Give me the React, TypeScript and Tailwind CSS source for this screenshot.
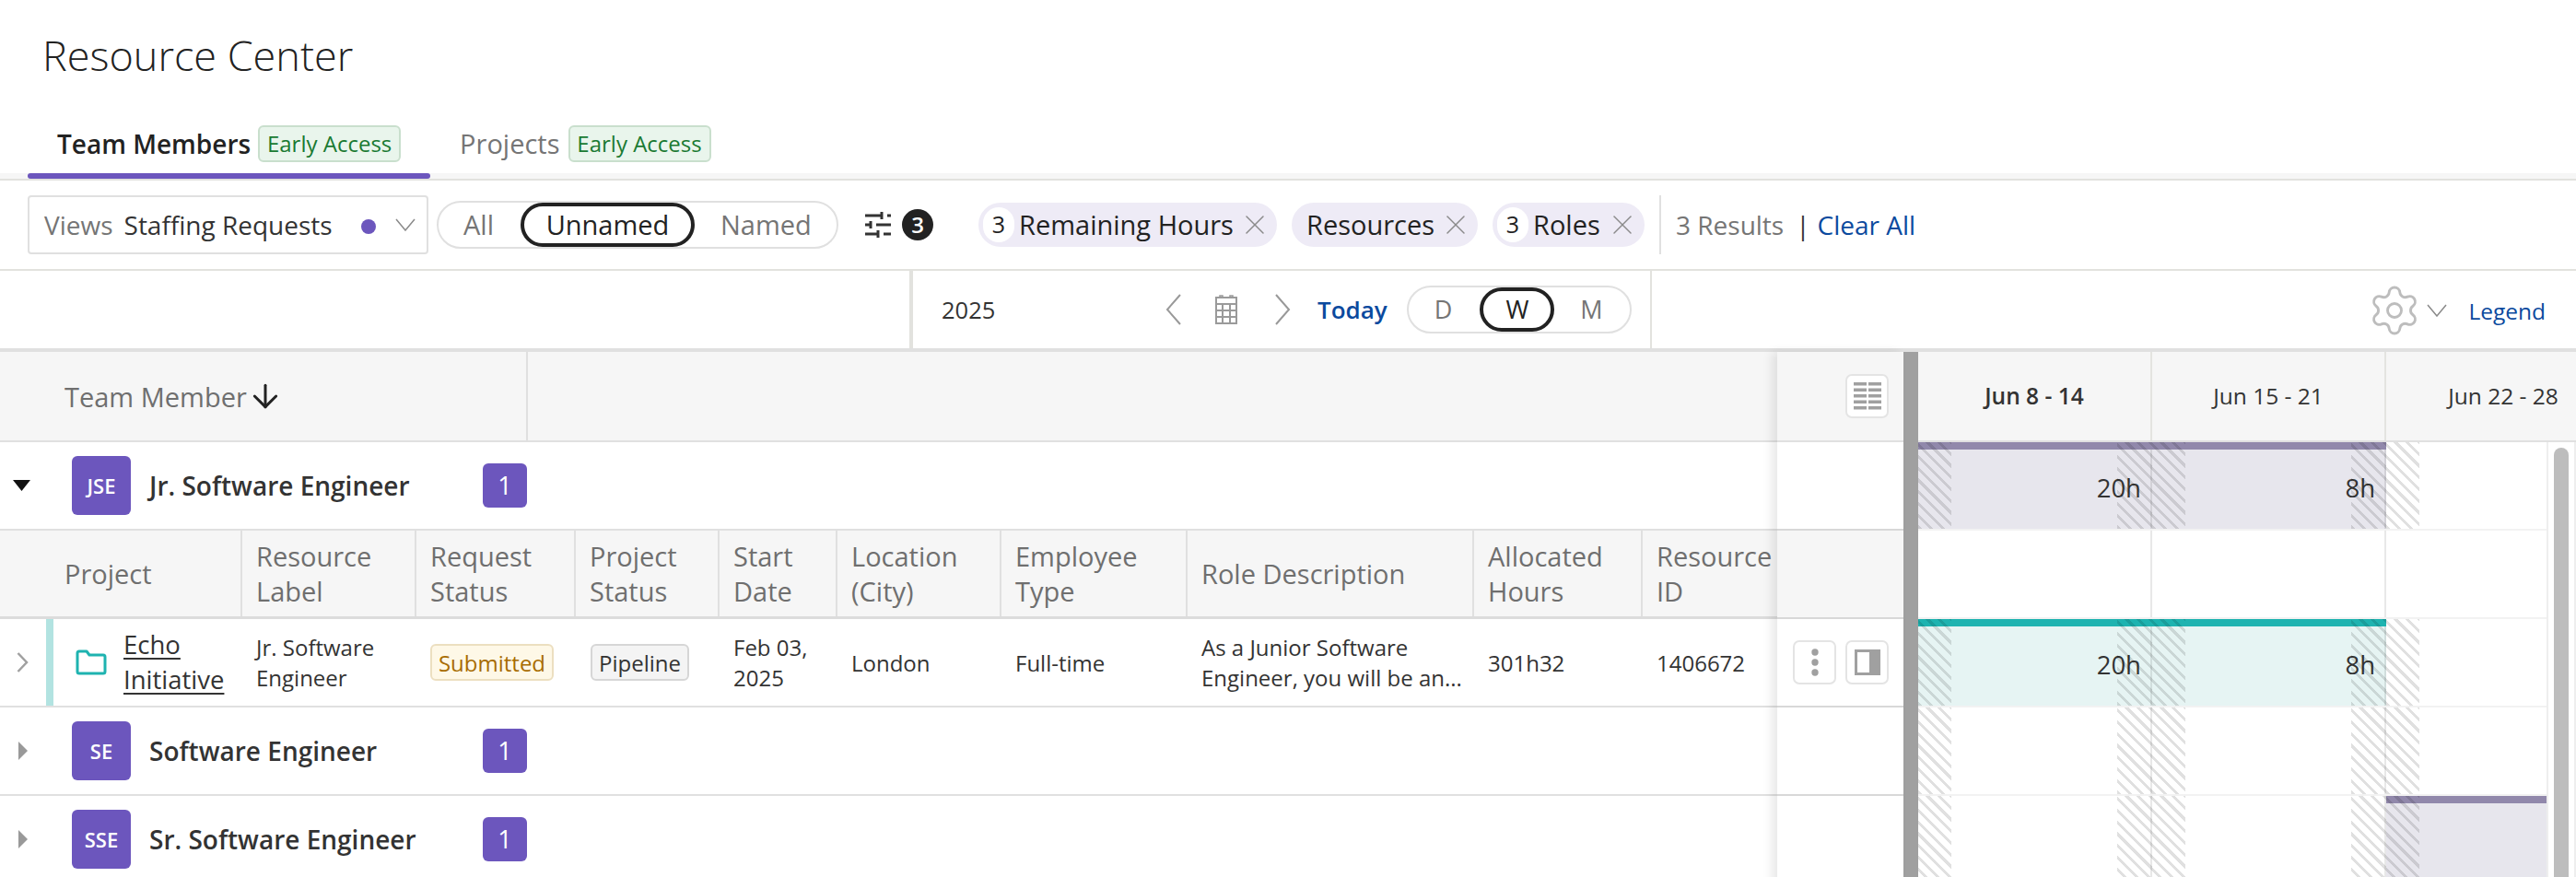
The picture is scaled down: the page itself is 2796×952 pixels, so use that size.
import React from "react";
import { ArrowDown, Settings, X } from "lucide-react";

const hatch =
  "pointer-events-none absolute top-0 bottom-0 bg-[repeating-linear-gradient(45deg,rgba(0,0,0,0.12)_0,rgba(0,0,0,0.12)_3px,transparent_3px,transparent_9px)]";

function Thin({ d, className, w = 24, h = 24, sw = 2, stroke = "#999999" }: { d: string; className?: string; w?: number; h?: number; sw?: number; stroke?: string }) {
  return (
    <svg width={w} height={h} viewBox={`0 0 ${w} ${h}`} fill="none" stroke={stroke} strokeWidth={sw} className={className}>
      <path d={d} />
    </svg>
  );
}

function EarlyAccess() {
  return (
    <span className="inline-flex h-[40px] w-[155px] items-center justify-center rounded-[6px] border-2 border-[#c9dfcd] bg-[#e9f5ec] text-[24px] text-[#1a7a32]">
      Early Access
    </span>
  );
}

function Chip({ count, label, width }: { count?: string; label: string; width: string }) {
  return (
    <div className={`flex h-[48px] items-center rounded-full bg-[#eeebf6] pl-[5px] ${width}`}>
      {count ? (
        <span className="mr-[5px] flex h-[38px] w-[34px] items-center justify-center rounded-full bg-white text-[25px] text-[#222222]">{count}</span>
      ) : (
        <span className="w-[11px]" />
      )}
      <span className="text-[29px] font-medium text-[#222222]">{label}</span>
      <X className="ml-auto mr-[6px] text-[#8a8a8a]" size={36} strokeWidth={1} />
    </div>
  );
}

function FilterRow() {
  return (
    <div className="flex h-[98px] items-center border-b-2 border-[#e2e2de] pl-[30px]">
      <div className="flex h-[64px] w-[435px] items-center rounded-[4px] border-2 border-[#e0e0e0] pl-[16px]">
        <span className="text-[28px] text-[#757575]">Views</span>
        <span className="ml-[12px] text-[28px] text-[#333333]">Staffing Requests</span>
        <span className="ml-[31px] mt-[4px] h-[16px] w-[16px] shrink-0 rounded-full bg-[#6c56bd]" />
        <Thin className="ml-[21px] shrink-0" w={22} h={14} sw={1.5} d="M1 1 L11 13 L21 1" stroke="#8a8a8a" />
      </div>
      <div className="ml-[9px] flex h-[52px] w-[436px] items-center rounded-full border-2 border-[#e0e0e0] text-[29px] text-[#757575]">
        <span className="ml-[27px]">All</span>
        <span className="ml-[29px] flex h-[48px] w-[189px] items-center justify-center rounded-full border-4 border-[#222222] font-medium text-[#222222]">Unnamed</span>
        <span className="ml-[28px]">Named</span>
      </div>
      <svg className="ml-[28px]" width="30" height="30" viewBox="0 0 30 30" fill="none" stroke="#333333" strokeWidth="3">
        <path d="M1 5h18M25 5h4M19 1v8M1 15h6M13 15h16M7 11v8M1 25h14M21 25h8M15 21v8" />
      </svg>
      <span className="ml-[11px] flex h-[34px] w-[34px] items-center justify-center rounded-full bg-[#222222] text-[24px] font-semibold text-white">3</span>
      <div className="ml-[49px] flex items-center gap-[16px]">
        <Chip count="3" label="Remaining Hours" width="w-[324px]" />
        <Chip label="Resources" width="w-[202px]" />
        <Chip count="3" label="Roles" width="w-[165px]" />
      </div>
      <div className="ml-[16px] flex h-[64px] items-center border-l-2 border-[#e0e0e0] pl-[16px] text-[28px] text-[#757575]">
        <span>3 Results</span>
        <span className="ml-[13px] text-[#333333]">|</span>
        <span className="ml-[8px] text-[#0b4a9e]">Clear All</span>
      </div>
    </div>
  );
}

function DateRow() {
  return (
    <div className="flex h-[88px] border-b-4 border-[#e0e0e0]">
      <div className="w-[987px]" />
      <div className="flex w-[806px] items-center border-x-[2px] border-l-4 border-[#e2e2de]">
        <span className="ml-[31px] w-[243px] text-[25.500px] text-[#333333]">2025</span>
        <Thin w={18} h={34} sw={2} d="M16 1 L2 17 L16 33" />
        <svg className="ml-[36px]" width="24" height="32" viewBox="0 0 24 32" fill="none" stroke="#9a9a9a" strokeWidth="2">
          <rect x="1" y="3" width="22" height="28" />
          <path d="M1 10h22M1 17h22M1 24h22M8 10v21M16 10v21" />
          <path d="M5 3V1h3v2M16 3V1h3v2" strokeWidth="1.5" />
        </svg>
        <Thin className="ml-[40px]" w={18} h={34} sw={2} d="M2 1 L16 17 L2 33" />
        <span className="ml-[29px] text-[26px] font-semibold text-[#0b4a9e]">Today</span>
        <div className="ml-[21px] flex h-[52px] w-[244px] items-center rounded-full border-2 border-[#e0e0e0] text-[27px] text-[#757575]">
          <span className="ml-[28px]">D</span>
          <span className="ml-[30px] flex h-[48px] w-[81px] items-center justify-center rounded-full border-4 border-[#222222] font-medium text-[#222222]">W</span>
          <span className="ml-[28px]">M</span>
        </div>
      </div>
      <div className="flex flex-1 items-center justify-end pr-[33px] pt-[2px]">
        <Settings size={60} strokeWidth={1.15} className="text-[#bdbdbd]" />
        <Thin className="ml-[5px]" w={22} h={14} sw={1.5} d="M1 1 L11 13 L21 1" stroke="#8a8a8a" />
        <span className="ml-[23px] mt-[2px] text-[24.500px] text-[#0b4a9e]">Legend</span>
      </div>
    </div>
  );
}

function GroupRow({ abbr, name, open }: { abbr: string; name: string; open?: boolean }) {
  return (
    <div className="flex h-[96px] items-center border-b-2 border-[#e0e0e0] bg-white">
      <div className="flex w-[78px] items-center pl-[14px]">
        {open ? (
          <svg width="20" height="12" viewBox="0 0 20 12"><path d="M0 0h19L9.500 12z" fill="#111111" /></svg>
        ) : (
          <svg className="ml-[6px]" width="10" height="20" viewBox="0 0 10 20"><path d="M0 0l10 10L0 20z" fill="#999999" /></svg>
        )}
      </div>
      <div className="flex h-[64px] w-[64px] items-center justify-center rounded-[6px] bg-[#6c56bd] text-[22px] font-semibold text-white">{abbr}</div>
      <div className="ml-[20px] w-[362px] text-[28px] font-semibold text-[#333333]">{name}</div>
      <div className="flex h-[48px] w-[48px] items-center justify-center rounded-[6px] bg-[#6c56bd] text-[27px] font-medium text-white">1</div>
    </div>
  );
}

const gridCols = "grid grid-cols-[261px_189px_173px_156px_128px_178px_202px_311px_183px_148px]";

function TableHead() {
  const cols = ["Resource Label", "Request Status", "Project Status", "Start Date", "Location (City)", "Employee Type", "Role Description", "Allocated Hours", "Resource ID"];
  const breaks: Record<string, string[]> = {
    "Resource Label": ["Resource", "Label"],
    "Request Status": ["Request", "Status"],
    "Project Status": ["Project", "Status"],
    "Start Date": ["Start", "Date"],
    "Location (City)": ["Location", "(City)"],
    "Employee Type": ["Employee", "Type"],
    "Role Description": ["Role Description"],
    "Allocated Hours": ["Allocated", "Hours"],
    "Resource ID": ["Resource", "ID"],
  };
  return (
    <div className={`${gridCols} h-[96px] border-b-[3px] border-[#dcdcdc] bg-[#f6f6f6] text-[29px] leading-[38px] text-[#6f6f6f]`}>
      <div className="flex items-center pl-[70px]">Project</div>
      {cols.map((c) => (
        <div key={c} className="flex flex-col justify-center whitespace-nowrap border-l-2 border-[#e0e0e0] pl-[15px]">
          {breaks[c].map((l) => (
            <span key={l}>{l}</span>
          ))}
        </div>
      ))}
    </div>
  );
}

function ProjectRow() {
  return (
    <div className={`${gridCols} h-[96px] border-b-2 border-[#e0e0e0] bg-white text-[24px] leading-[33px] text-[#333333]`}>
      <div className="flex h-full items-center">
        <Thin className="ml-[18px]" w={13} h={22} sw={2.500} d="M1.500 1 L11 11 L1.500 21" stroke="#a0a0a0" />
        <div className="ml-[19px] h-full w-[8px] bg-[#b2e3e1]" />
        <svg className="ml-[24px]" width="34" height="28" viewBox="0 0 34 28" fill="none" stroke="#1eb3b0" strokeWidth="3">
          <path d="M2 4q0-2 2-2h8l3 4h15q2 0 2 2v16q0 2-2 2H4q-2 0-2-2z" strokeLinejoin="round" />
        </svg>
        <a className="ml-[18px] text-[27.500px] leading-[38px] underline underline-offset-[4px]">Echo<br />Initiative</a>
      </div>
      <div className="flex flex-col justify-center pl-[17px]"><span>Jr. Software</span><span>Engineer</span></div>
      <div className="flex items-center pl-[17px]">
        <span className="flex h-[40px] w-[134px] items-center justify-center rounded-[6px] border-2 border-[#ecdfc0] bg-[#fef8e7] text-[24px] text-[#a86c00]">Submitted</span>
      </div>
      <div className="flex items-center pl-[18px]">
        <span className="flex h-[40px] w-[107px] items-center justify-center rounded-[6px] border-2 border-[#d6d6d6] bg-[#f4f4f4] text-[24px] text-[#333333]">Pipeline</span>
      </div>
      <div className="flex flex-col justify-center pl-[17px]"><span>Feb 03,</span><span>2025</span></div>
      <div className="flex items-center pl-[17px]">London</div>
      <div className="flex items-center pl-[17px]">Full-time</div>
      <div className="flex flex-col justify-center whitespace-nowrap pl-[17px]"><span>As a Junior Software</span><span>Engineer, you will be an...</span></div>
      <div className="flex items-center pl-[17px]">301h32</div>
      <div className="flex items-center pl-[17px]">1406672</div>
    </div>
  );
}

function IconBtn({ children }: { children: React.ReactNode }) {
  return (
    <div className="flex h-[48px] w-[47px] items-center justify-center rounded-[7px] border-2 border-[#e4e4e4] bg-white">{children}</div>
  );
}

function TableIcon() {
  return (
    <svg width="32" height="30" viewBox="0 0 32 30" fill="#a0a0a0">
      {[0, 6.500, 13, 19.500, 26].map((y) => (
        <React.Fragment key={y}>
          <rect x="1" y={y} width="14" height="3.500" />
          <rect x="17" y={y} width="14" height="3.500" />
        </React.Fragment>
      ))}
    </svg>
  );
}

function Actions() {
  const cell = "flex h-[96px] items-center justify-end gap-[10px] border-b-2 bg-white pr-[16px]";
  return (
    <div className="relative z-10 w-[137px] shrink-0 shadow-[-6px_0_10px_rgba(0,0,0,0.09)]">
      <div className="flex h-[98px] items-center justify-end border-b-2 border-[#e0e0e0] bg-[#f6f6f6] pr-[16px]">
        <IconBtn><TableIcon /></IconBtn>
      </div>
      <div className={`${cell} border-[#d8d8d8]`} />
      <div className="h-[96px] border-b-2 border-[#d8d8d8] bg-[#f6f6f6]" />
      <div className={`${cell} border-[#d8d8d8]`}>
        <IconBtn>
          <svg width="10" height="30" viewBox="0 0 10 30" fill="#a0a0a0">
            <circle cx="5" cy="4" r="3.700" /><circle cx="5" cy="15" r="3.700" /><circle cx="5" cy="26" r="3.700" />
          </svg>
        </IconBtn>
        <IconBtn>
          <svg width="28" height="28" viewBox="0 0 28 28">
            <rect width="28" height="28" fill="#a0a0a0" />
            <rect x="3" y="3" width="13" height="22" fill="#ffffff" />
          </svg>
        </IconBtn>
      </div>
      <div className={`${cell} border-[#d8d8d8]`} />
      <div className={`${cell} border-[#d8d8d8]`} />
    </div>
  );
}

type Tone = "purple" | "teal" | undefined;

function WeekCell({ width, tone, text, hatched, edge }: { width: string; tone?: Tone; text?: string; hatched?: boolean; edge?: boolean }) {
  const bg = tone === "purple" ? "bg-[#e7e6ed]" : tone === "teal" ? "bg-[#e6f4f3]" : "";
  const band = tone === "purple" ? "bg-[#9188ab]" : "bg-[#1eb3b0]";
  return (
    <div className={`relative flex h-full flex-col ${width} ${bg} ${edge ? "" : "border-r-2 border-[rgba(0,0,0,0.09)]"}`}>
      {tone && <div className={`h-[8px] shrink-0 ${edge ? "" : "-mr-[2px]"} ${band}`} />}
      {text && <div className="flex flex-1 items-center justify-end pb-[2px] pr-[10px] text-[27.500px] text-[#333333]">{text}</div>}
      {hatched && (
        <>
          <div className={`${hatch} left-0 w-[36px]`} />
          {!edge && <div className={`${hatch} -right-[2px] w-[38px]`} />}
        </>
      )}
    </div>
  );
}

function TimeRow({ cells, hatched = true }: { cells: { tone?: Tone; text?: string }[]; hatched?: boolean }) {
  return (
    <div className="flex h-[96px] border-b-2 border-[#f2f2f2] bg-white">
      <WeekCell width="w-[254px]" hatched={hatched} {...cells[0]} />
      <WeekCell width="w-[254px]" hatched={hatched} {...cells[1]} />
      <WeekCell width="w-[174px]" hatched={hatched} edge {...cells[2]} />
    </div>
  );
}

function Timeline() {
  return (
    <div className="w-[714px] shrink-0">
      <div className="flex h-[98px] overflow-hidden border-b-2 border-[#e0e0e0] bg-[#f6f6f6] text-[24.500px] text-[#333333]">
        <div className="flex w-[254px] shrink-0 items-center justify-center border-r-2 border-[#e4e4e0] font-semibold">Jun 8 - 14</div>
        <div className="flex w-[254px] shrink-0 items-center justify-center border-r-2 border-[#e4e4e0]">Jun 15 - 21</div>
        <div className="flex w-[254px] shrink-0 items-center justify-center">Jun 22 - 28</div>
      </div>
      <div className="flex">
        <div className="w-[682px]">
          <TimeRow cells={[{ tone: "purple", text: "20h" }, { tone: "purple", text: "8h" }, {}]} />
          <TimeRow hatched={false} cells={[{}, {}, {}]} />
          <TimeRow cells={[{ tone: "teal", text: "20h" }, { tone: "teal", text: "8h" }, {}]} />
          <TimeRow cells={[{}, {}, {}]} />
          <TimeRow cells={[{}, {}, { tone: "purple" }]} />
        </div>
        <div className="w-[32px] border-x-2 border-[#eeeeee] bg-white pl-[6px] pt-[6px]">
          <div className="h-[500px] w-[16px] rounded-t-full bg-[#bdbdbd]" />
        </div>
      </div>
    </div>
  );
}

export default function App() {
  return (
    <div className="h-[952px] w-[2796px] overflow-hidden bg-white font-['Open_Sans',sans-serif]">
      <div className="flex h-[124px] items-center pb-[5px] pl-[46px] text-[45px] font-light text-[#222222]">Resource Center</div>
      <div className="flex h-[64px] items-center pl-[62px]">
        <span className="text-[28px] font-semibold text-[#222222]">Team Members</span>
        <span className="ml-[8px]"><EarlyAccess /></span>
        <span className="ml-[64px] text-[29px] text-[#757575]">Projects</span>
        <span className="ml-[9px]"><EarlyAccess /></span>
      </div>
      <div className="h-[8px] border-b-2 border-[#e2e2de] bg-[#f6f6f6] pl-[30px]">
        <div className="h-[6px] w-[437px] rounded-[3px] bg-[#6c56bd]" />
      </div>
      <FilterRow />
      <DateRow />
      <div className="flex">
        <div className="w-[1929px] shrink-0">
          <div className="flex h-[98px] border-b-2 border-[#e0e0e0] bg-[#f6f6f6]">
            <div className="flex w-[573px] items-center border-r-2 border-[#e0e0e0] pl-[70px] pt-[2px] text-[29px] text-[#6f6f6f]">
              Team Member
              <ArrowDown size={40} strokeWidth={1.8} className="-mt-[2px] text-[#222222]" />
            </div>
          </div>
          <GroupRow abbr="JSE" name="Jr. Software Engineer" open />
          <TableHead />
          <ProjectRow />
          <GroupRow abbr="SE" name="Software Engineer" />
          <GroupRow abbr="SSE" name="Sr. Software Engineer" />
        </div>
        <Actions />
        <div className="w-[16px] shrink-0 bg-[#a0a0a0]" />
        <Timeline />
      </div>
    </div>
  );
}
